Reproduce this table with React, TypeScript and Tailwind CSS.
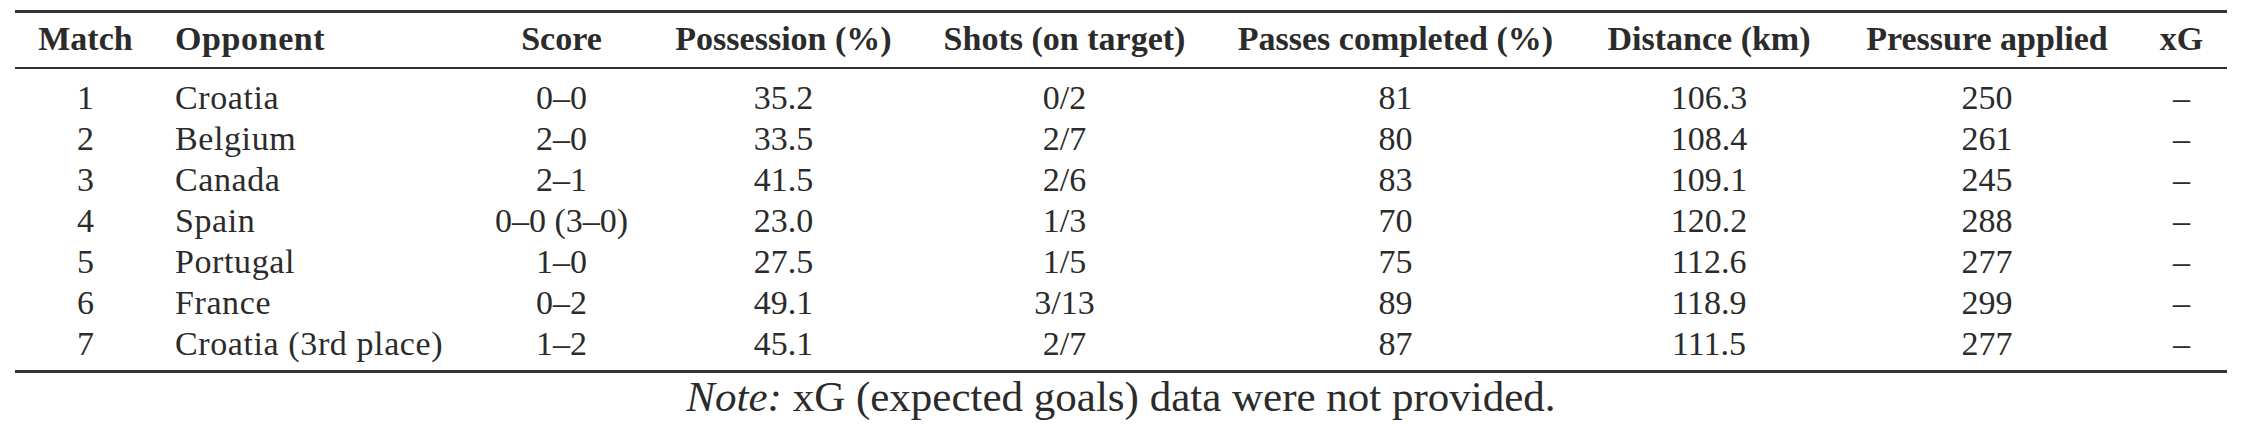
import React from "react";

const headers = [
  "Match",
  "Opponent",
  "Score",
  "Possession (%)",
  "Shots (on target)",
  "Passes completed (%)",
  "Distance (km)",
  "Pressure applied",
  "xG",
];

const rows: string[][] = [
  ["1", "Croatia", "0–0", "35.2", "0/2", "81", "106.3", "250", "–"],
  ["2", "Belgium", "2–0", "33.5", "2/7", "80", "108.4", "261", "–"],
  ["3", "Canada", "2–1", "41.5", "2/6", "83", "109.1", "245", "–"],
  ["4", "Spain", "0–0 (3–0)", "23.0", "1/3", "70", "120.2", "288", "–"],
  ["5", "Portugal", "1–0", "27.5", "1/5", "75", "112.6", "277", "–"],
  ["6", "France", "0–2", "49.1", "3/13", "89", "118.9", "299", "–"],
  ["7", "Croatia (3rd place)", "1–2", "45.1", "2/7", "87", "111.5", "277", "–"],
];

const grid =
  "grid grid-cols-[141px_318px_175px_269px_293px_369px_258px_298px_91px]";

function cellClass(i: number) {
  return i === 1
    ? "text-left pl-[19px] whitespace-nowrap tracking-[0.6px]"
    : "text-center whitespace-nowrap";
}

export default function App() {
  return (
    <div className="w-[2247px] h-[429px] bg-white pl-[15px] pt-[10px] text-[#2b2b2b] font-['Liberation_Serif',serif] text-[34px] leading-[41px]">
      <div className="w-[2212px]">
        <div className="h-[3px] bg-[#333333]" />
        <div className={`${grid} pt-[5px] pb-[8px] font-bold`}>
          {headers.map((h, i) => (
            <div key={h} className={cellClass(i)}>
              {h}
            </div>
          ))}
        </div>
        <div className="h-[2px] bg-[#333333]" />
        <div className="pt-[8px] pb-[6px]">
          {rows.map((r) => (
            <div key={r[0]} className={grid}>
              {r.map((c, i) => (
                <div key={i} className={cellClass(i)}>
                  {c}
                </div>
              ))}
            </div>
          ))}
        </div>
        <div className="h-[3px] bg-[#333333]" />
        <div className="pt-[4px] text-center text-[43px] leading-[40px]">
          <span className="italic">Note:</span> xG (expected goals) data were not provided.
        </div>
      </div>
    </div>
  );
}
